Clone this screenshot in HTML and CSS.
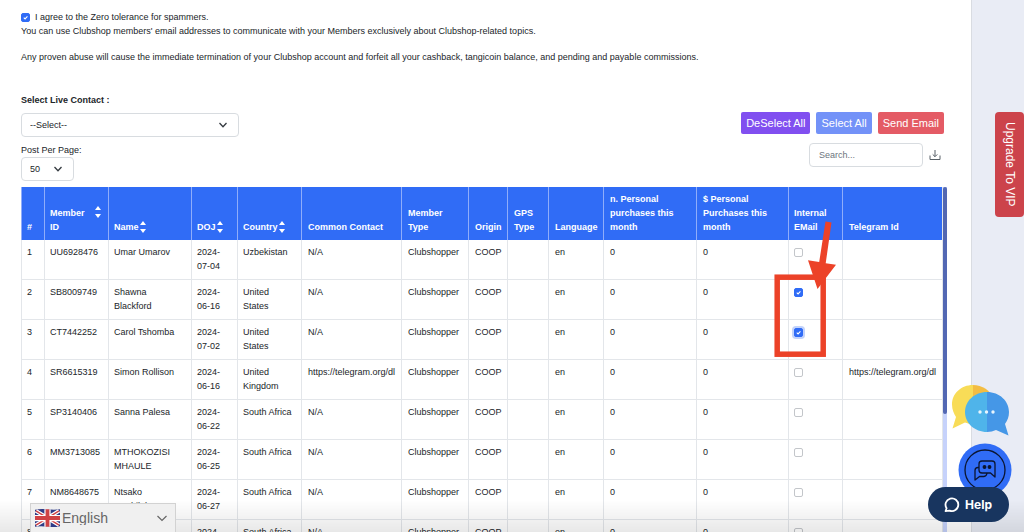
FILE: index.html
```html
<!DOCTYPE html>
<html lang="en">
<head>
<meta charset="utf-8">
<title>Clubshop members</title>
<link rel="stylesheet" href="styles.css">
</head>
<body>
<div class="app">
  <main class="content">
    <section class="terms">
      <label class="agree"><input class="check" type="checkbox" checked> I agree to the Zero tolerance for spammers.</label>
      <p class="note">You can use Clubshop members' email addresses to communicate with your Members exclusively about Clubshop-related topics.</p>
      <p class="note">Any proven abuse will cause the immediate termination of your Clubshop account and forfeit all your cashback, tangicoin balance, and pending and payable commissions.</p>
    </section>

    <section class="controls">
      <div class="filters">
        <label class="filter-title" for="contact">Select Live Contact :</label>
        <div class="select-box select-wide">
          <select id="contact"><option>--Select--</option></select>
          <svg class="chevron" viewBox="0 0 10 10"><path d="M1.500 3 5 6.700 8.500 3"/></svg>
        </div>
        <label class="filter-label" for="perpage">Post Per Page:</label>
        <div class="select-box select-small">
          <select id="perpage"><option>50</option></select>
          <svg class="chevron" viewBox="0 0 10 10"><path d="M1.500 3 5 6.700 8.500 3"/></svg>
        </div>
      </div>
      <div class="actions">
        <div class="buttons">
          <button class="btn btn-purple" type="button">DeSelect All</button>
          <button class="btn btn-blue" type="button">Select All</button>
          <button class="btn btn-red" type="button">Send Email</button>
        </div>
        <div class="search-row">
          <input class="search" type="text" placeholder="Search..." aria-label="Search">
          <button class="download" type="button" aria-label="Download">
            <svg viewBox="0 0 12 12"><path d="M1 6.500V10.500H11V6.500M6 1V7.500M3.700 5.400 6 7.700 8.300 5.400"/></svg>
          </button>
        </div>
      </div>
    </section>

    <section class="table-area">
      <table class="members">
        <colgroup>
          <col class="c-num"><col class="c-id"><col class="c-name"><col class="c-doj"><col class="c-country"><col class="c-contact"><col class="c-type"><col class="c-origin"><col class="c-gps"><col class="c-lang"><col class="c-count"><col class="c-spend"><col class="c-mail"><col class="c-tg">
        </colgroup>
        <thead>
          <tr>
            <th>#</th>
            <th><span class="sort-head sort-wide">Member<br>ID <svg class="sort" viewBox="0 0 6 12"><path d="M0 4 3 0 6 4ZM0 8 3 12 6 8Z"/></svg></span></th>
            <th><span class="sort-head">Name<svg class="sort" viewBox="0 0 6 12"><path d="M0 4 3 0 6 4ZM0 8 3 12 6 8Z"/></svg></span></th>
            <th><span class="sort-head">DOJ<svg class="sort" viewBox="0 0 6 12"><path d="M0 4 3 0 6 4ZM0 8 3 12 6 8Z"/></svg></span></th>
            <th><span class="sort-head">Country<svg class="sort" viewBox="0 0 6 12"><path d="M0 4 3 0 6 4ZM0 8 3 12 6 8Z"/></svg></span></th>
            <th>Common Contact</th>
            <th>Member<br>Type</th>
            <th>Origin</th>
            <th>GPS<br>Type</th>
            <th>Language</th>
            <th>n. Personal<br>purchases this<br>month</th>
            <th>$ Personal<br>Purchases this<br>month</th>
            <th>Internal<br>EMail</th>
            <th>Telegram Id</th>
          </tr>
        </thead>
        <tbody>
          <tr><td>1</td><td>UU6928476</td><td>Umar Umarov</td><td>2024-<br>07-04</td><td>Uzbekistan</td><td>N/A</td><td>Clubshopper</td><td>COOP</td><td></td><td>en</td><td>0</td><td>0</td><td><input class="check" type="checkbox" aria-label="Email Umar Umarov"></td><td></td></tr>
          <tr><td>2</td><td>SB8009749</td><td>Shawna<br>Blackford</td><td>2024-<br>06-16</td><td>United<br>States</td><td>N/A</td><td>Clubshopper</td><td>COOP</td><td></td><td>en</td><td>0</td><td>0</td><td><input class="check" type="checkbox" checked aria-label="Email Shawna Blackford"></td><td></td></tr>
          <tr><td>3</td><td>CT7442252</td><td>Carol Tshomba</td><td>2024-<br>07-02</td><td>United<br>States</td><td>N/A</td><td>Clubshopper</td><td>COOP</td><td></td><td>en</td><td>0</td><td>0</td><td><input class="check check-focus" type="checkbox" checked aria-label="Email Carol Tshomba"></td><td></td></tr>
          <tr><td>4</td><td>SR6615319</td><td>Simon Rollison</td><td>2024-<br>06-16</td><td>United<br>Kingdom</td><td>https://telegram.org/dl</td><td>Clubshopper</td><td>COOP</td><td></td><td>en</td><td>0</td><td>0</td><td><input class="check" type="checkbox" aria-label="Email Simon Rollison"></td><td>https://telegram.org/dl</td></tr>
          <tr><td>5</td><td>SP3140406</td><td>Sanna Palesa</td><td>2024-<br>06-22</td><td>South Africa</td><td>N/A</td><td>Clubshopper</td><td>COOP</td><td></td><td>en</td><td>0</td><td>0</td><td><input class="check" type="checkbox" aria-label="Email Sanna Palesa"></td><td></td></tr>
          <tr><td>6</td><td>MM3713085</td><td>MTHOKOZISI<br>MHAULE</td><td>2024-<br>06-25</td><td>South Africa</td><td>N/A</td><td>Clubshopper</td><td>COOP</td><td></td><td>en</td><td>0</td><td>0</td><td><input class="check" type="checkbox" aria-label="Email member 6"></td><td></td></tr>
          <tr><td>7</td><td>NM8648675</td><td>Ntsako<br>Mashilela</td><td>2024-<br>06-27</td><td>South Africa</td><td>N/A</td><td>Clubshopper</td><td>COOP</td><td></td><td>en</td><td>0</td><td>0</td><td><input class="check" type="checkbox" aria-label="Email member 7"></td><td></td></tr>
          <tr><td>8</td><td></td><td></td><td>2024-</td><td>South Africa</td><td>N/A</td><td>Clubshopper</td><td>COOP</td><td></td><td>en</td><td>0</td><td>0</td><td><input class="check" type="checkbox" aria-label="Email member 8"></td><td></td></tr>
        </tbody>
      </table>
      <div class="track"><div class="thumb"></div></div>
    </section>
  </main>

  <aside class="rail">
    <a class="upgrade" href="#upgrade">Upgrade To VIP</a>
  </aside>
</div>

<div class="fade"></div>

<svg class="highlight" viewBox="0 0 64 138" aria-hidden="true">
  <rect x="3.200" y="56.200" width="46" height="77" fill="none" stroke="#ec4228" stroke-width="5.500"/>
  <path d="M51.500 0.500 57.500 1.500 51.700 42.300 62 43.800 43.500 68 34 39.300 45.200 41Z" fill="#ec4228"/>
</svg>

<div class="language">
  <svg class="flag" viewBox="0 0 26 20" aria-hidden="true">
    <path fill="#2f3b86" d="M0 1.500Q6 0 13 1T26 1V18.500Q20 20 13 19T0 19Z"/>
    <path stroke="#fff" stroke-width="4" d="M1 2.500 25 17.500M25 2.500 1 17.500"/>
    <path stroke="#cf4245" stroke-width="1.500" d="M1 2.500 25 17.500M25 2.500 1 17.500"/>
    <path stroke="#fff" stroke-width="6.500" d="M13 1V19M0 10H26"/>
    <path stroke="#cf4245" stroke-width="4" d="M13 1V19M0 10H26"/>
  </svg>
  <select class="language-select" aria-label="Language"><option>English</option></select>
  <svg class="language-chevron" viewBox="0 0 12 12" aria-hidden="true"><path d="M1.500 4 6 8.500 10.500 4"/></svg>
</div>

<button class="chat" type="button" aria-label="Chat">
  <svg viewBox="0 0 58 52">
    <path fill="#f8dc57" d="M22 1C10 1 1 9.500 1 20.500c0 5 2 9.500 4 12.500L1.500 44.500 14 38.500q4 1.500 8 1.500Z"/>
    <path fill="#f3bd43" d="M22 1c9 0 18 5.500 20 14L22 40Z"/>
    <path fill="#4fb4ea" d="M36 8C23.500 8 14 17 14 28s9.500 20 22 20Z"/>
    <path fill="#4597e7" d="M36 8c12.500 0 22 9 22 20 0 5-1.500 8.500-4 12l3.500 11.500L45 46q-4 2-9 2Z"/>
    <g fill="#e8f5fd"><circle cx="29" cy="28" r="1.700"/><circle cx="35.500" cy="28" r="1.700"/><circle cx="42" cy="28" r="1.700"/></g>
  </svg>
</button>

<button class="messages" type="button" aria-label="Messages">
  <svg viewBox="0 0 54 54">
    <circle cx="27" cy="27" r="26.500" fill="#306cf6"/>
    <g fill="none" stroke="#0b1530" stroke-width="1.300" stroke-linejoin="round">
      <circle cx="27" cy="27" r="20"/>
      <path d="M24 18h10q3 0 3 3v13l-4.500-4h-8.500q-3 0-3-3v-6q0-3 3-3Z"/>
      <path d="M21 24.500h-1q-3 0-3 3v9.500l4.500-3.500h4.500q2.500 0 3-3.500"/>
      <circle cx="26.500" cy="24" r="1.300" fill="#0b1530"/><circle cx="31.500" cy="24" r="1.300" fill="#0b1530"/>
    </g>
  </svg>
</button>

<button class="help" type="button">
  <svg viewBox="0 0 16 16"><path d="M1.500 14.200 2.600 11.300A6.400 6.400 0 1 1 5.600 13.700Z"/></svg>
  Help
</button>
</body>
</html>
```

FILE: styles.css
```css
* { box-sizing: border-box; }

body {
  margin: 0;
  overflow: hidden;
  background: #fff;
  color: #212529;
  font: 9px/14px "Liberation Sans", Arial, sans-serif;
}

button, input, select { font: inherit; color: inherit; margin: 0; }
button { border: 0; padding: 0; cursor: pointer; }
svg { display: block; }

.app { display: flex; height: 100vh; }

.content {
  flex: 1;
  min-width: 0;
  display: flex;
  flex-direction: column;
  padding: 10px 24px 0 21px;
  overflow: hidden;
}

.rail {
  width: 53px;
  flex: none;
  display: flex;
  justify-content: flex-end;
  align-items: flex-start;
  padding-top: 112px;
  border-left: 1px solid #d9dce2;
  background: #e9ecf5;
}

.upgrade {
  writing-mode: vertical-rl;
  width: 29px;
  padding: 10px 0;
  border-radius: 4px;
  background: #cc434b;
  color: #fff;
  font-size: 12px;
  line-height: 29px;
  text-decoration: none;
}

.agree { display: flex; align-items: center; gap: 5px; }
.note { margin: 0 0 12px; }

.check {
  appearance: none;
  display: block;
  width: 9px;
  height: 9px;
  border: 1px solid #c3c6ca;
  border-radius: 2px;
  background: #fff;
}
.check:checked {
  border-color: #306cf6;
  background: #306cf6 url("data:image/svg+xml,%3Csvg xmlns='http://www.w3.org/2000/svg' viewBox='0 0 8 8'%3E%3Cpath d='M2 4.200 3.500 5.600 6.200 2.700' fill='none' stroke='white' stroke-width='1.200'/%3E%3C/svg%3E") center / 100%;
}
.check-focus { box-shadow: 0 0 0 2px #c3d3fb; }

.controls {
  display: flex;
  justify-content: space-between;
  padding: 17px 0 6px;
}
.filters { display: flex; flex-direction: column; align-items: flex-start; }
.filter-title { margin-bottom: 6px; font-weight: bold; }

.select-box { position: relative; height: 24px; }
.select-box select {
  appearance: none;
  width: 100%;
  height: 100%;
  padding: 0 8px;
  border: 1px solid #d8dce0;
  border-radius: 4px;
  background: #fff;
}
.select-wide { width: 218px; margin-bottom: 6px; }
.select-small { width: 53px; }
.chevron {
  position: absolute;
  right: 11px;
  top: 7px;
  width: 10px;
  height: 10px;
  fill: none;
  stroke: #343a40;
  stroke-width: 1.3;
  pointer-events: none;
}

.actions {
  display: flex;
  flex-direction: column;
  align-items: flex-end;
  gap: 9px;
  padding: 19px 3px 0 0;
}
.buttons { display: flex; gap: 6px; }
.btn {
  height: 22px;
  padding: 0 5px;
  border-radius: 2px;
  color: #fff;
  font-size: 11px;
}
.btn-purple { background: #814ff0; }
.btn-blue { background: #7392f8; }
.btn-red { background: #e45b65; }

.search-row { display: flex; align-items: center; gap: 6px; padding-right: 3px; }
.search {
  width: 114px;
  height: 24px;
  padding: 0 9px;
  border: 1px solid #d8dce0;
  border-radius: 4px;
}
.search::placeholder { color: #6c757d; opacity: 1; }
.download { width: 12px; height: 12px; background: none; }
.download svg { fill: none; stroke: #596168; stroke-width: 1; }

.table-area { flex: 1; min-height: 0; display: flex; }
.members {
  flex: 1;
  align-self: flex-start;
  table-layout: fixed;
  width: 100%;
  border-collapse: separate;
  border-spacing: 0;
}
.c-num { width: 23px; }
.c-id { width: 64px; }
.c-name { width: 83px; }
.c-doj { width: 46px; }
.c-country { width: 64px; }
.c-contact { width: 100px; }
.c-type { width: 67px; }
.c-origin { width: 39px; }
.c-gps { width: 41px; }
.c-lang { width: 55px; }
.c-count { width: 93px; }
.c-spend { width: 92px; }
.c-mail { width: 54px; }
.c-tg { width: 101px; }

th, td {
  text-align: left;
  white-space: nowrap;
  border-left: 1px solid #e3e6ea;
}
th {
  padding: 5px 0 6px 5px;
  vertical-align: bottom;
  border-color: #8fadfa;
  background: #306cf6;
  color: #fff;
}
td {
  height: 40px;
  padding: 5px 0 6px 5px;
  vertical-align: top;
  border-bottom: 1px solid #e3e6ea;
}
th:nth-child(n+6), td:nth-child(n+6) { padding-left: 6px; }
th:nth-child(13), td:nth-child(13) { padding-left: 5px; }
th:last-child, td:last-child { border-right: 1px solid #e3e6ea; }
td .check { margin-top: 3px; }

.sort-head { display: flex; align-items: center; gap: 1px; }
.sort-wide { align-items: flex-start; justify-content: space-between; padding-right: 7px; }
.sort { width: 6px; height: 12px; fill: #fff; flex: none; }

.track { width: 4px; flex: none; background: #c6d2fb; }
.thumb { height: 227px; border-radius: 2px; background: #5368b3; }

.fade {
  position: fixed;
  inset: auto 0 0;
  height: 32px;
  background: linear-gradient(transparent, rgba(0, 0, 0, .09));
  pointer-events: none;
}

.highlight {
  position: absolute;
  left: 774px;
  top: 221px;
  width: 64px;
  height: 138px;
  pointer-events: none;
}

.language {
  position: fixed;
  left: 30px;
  bottom: 0;
  display: flex;
  align-items: center;
  width: 146px;
  height: 29px;
  padding: 0 7px 0 4px;
  border: 1px solid #d2d2d2;
  border-bottom: 0;
  background: #f0f0f0;
}
.flag { width: 25px; height: 20px; fill: none; }
.language-select {
  appearance: none;
  flex: 1;
  min-width: 0;
  height: 24px;
  padding: 0 2px;
  border: 0;
  background: none;
  color: #666;
  font-size: 14px;
}
.language-chevron { width: 12px; height: 12px; fill: none; stroke: #666; stroke-width: 1.2; }

.chat, .messages { position: fixed; background: none; }
.chat { right: 15px; bottom: 96px; width: 58px; height: 52px; }
.messages { right: 12px; bottom: 35px; width: 54px; height: 54px; }

.help {
  position: fixed;
  right: 15px;
  bottom: 10px;
  display: flex;
  align-items: center;
  gap: 5px;
  height: 35px;
  padding: 0 17px 0 16px;
  border-radius: 18px;
  background: #18355f;
  color: #fff;
  font: bold 12px/16px Inter, sans-serif;
}
.help svg { width: 16px; height: 16px; fill: none; stroke: #fff; stroke-width: 1.8; stroke-linejoin: round; }
```
